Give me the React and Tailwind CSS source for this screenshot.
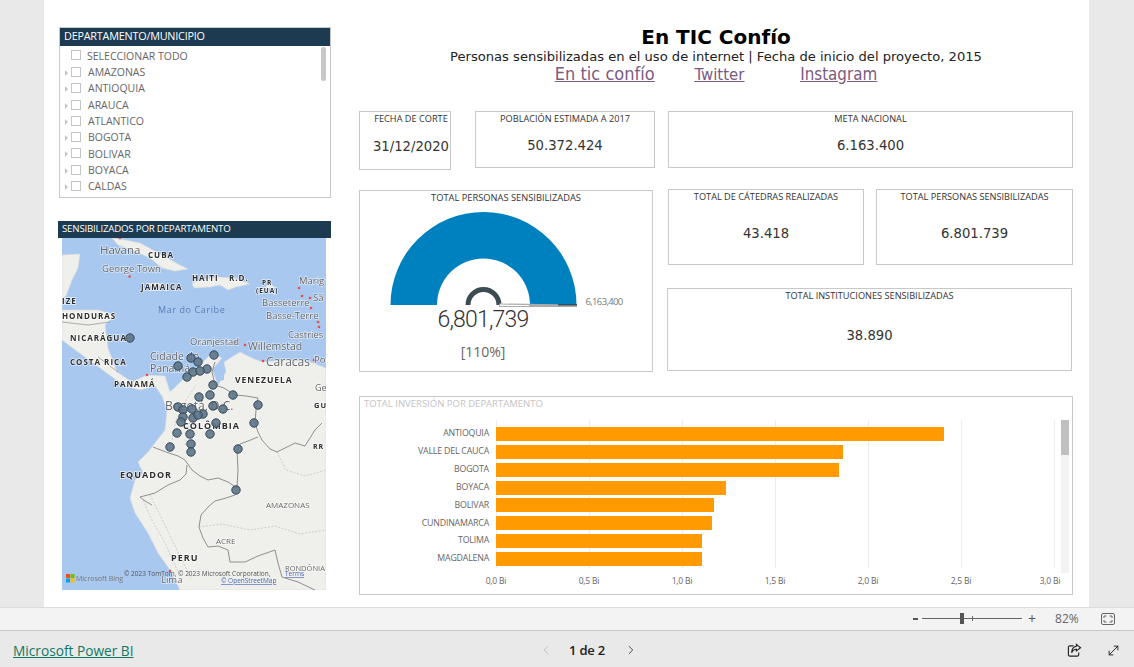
import { ChevronLeft, ChevronRight, MoveDiagonal } from "lucide-react"

const segoe = "font-['Open_Sans',sans-serif]"
const verdana = "font-['DejaVu_Sans',sans-serif]"
const condensed = "font-['DejaVu_Sans_Condensed','DejaVu_Sans',sans-serif]"

const departments = ["AMAZONAS", "ANTIOQUIA", "ARAUCA", "ATLANTICO", "BOGOTA", "BOLIVAR", "BOYACA", "CALDAS"]

const bars = [
  { name: "ANTIOQUIA", value: 2.41 },
  { name: "VALLE DEL CAUCA", value: 1.865 },
  { name: "BOGOTA", value: 1.845 },
  { name: "BOYACA", value: 1.235 },
  { name: "BOLIVAR", value: 1.17 },
  { name: "CUNDINAMARCA", value: 1.16 },
  { name: "TOLIMA", value: 1.11 },
  { name: "MAGDALENA", value: 1.105 },
]

const ticks = ["0,0 Bi", "0,5 Bi", "1,0 Bi", "1,5 Bi", "2,0 Bi", "2,5 Bi", "3,0 Bi"]

const dots = [
  [130, 338], [214, 355], [191, 358], [198, 362], [178, 366], [207, 369], [193, 372], [200, 371], [187, 377],
  [213, 385], [210, 395], [233, 395], [199, 397], [258, 405], [213, 406], [223, 409], [178, 407], [192, 409],
  [183, 410], [183, 417], [181, 422], [193, 418], [203, 414], [198, 415], [216, 423], [254, 423], [177, 433],
  [190, 434], [210, 434], [170, 447], [191, 444], [191, 452], [238, 449], [236, 490],
]

const redDots = [
  [129.7, 276.5], [120, 238], [299, 288], [302, 296], [310, 298], [311, 308], [318, 322], [319, 327], [235, 342],
  [245, 345], [263, 361], [314, 360], [147, 375], [170, 571],
]

// map labels: text, x, y, size, bold
const labels = [
  ["Havana", 100, 254, 11.5],
  ["CUBA", 148, 258, 8, true],
  ["George Town", 102, 272, 9.5],
  ["HAITI", 192, 281, 8, true],
  ["R.D.", 229, 281, 8, true],
  ["JAMAICA", 141, 290, 8, true],
  ["PR", 262, 285, 6.5, true],
  ["(EUA)", 256, 293, 6.5, true],
  ["Marig", 299, 284, 9.5],
  ["Sã", 313, 301, 9.5],
  ["Basseterre", 262, 306, 9.5],
  ["Basse-Terre", 266, 319, 9.5],
  ["IZE", 62, 304, 8, true],
  ["HONDURAS", 62, 319, 8, true],
  ["NICARÁGUA", 70, 341, 8, true],
  ["COSTA RICA", 70, 365, 8, true],
  ["PANAMÁ", 114, 387, 8, true],
  ["Castries", 288, 338, 9.5],
  ["Oranjestad", 190, 345, 9.5],
  ["Willemstad", 248, 350, 10.5],
  ["Cidade do", 150, 360, 10.5],
  ["Panamá", 150, 372, 10.5],
  ["Caracas", 266, 366, 12],
  ["Po", 314, 363, 9.5],
  ["VENEZUELA", 235, 383, 8.5, true],
  ["Ge", 315, 391, 9],
  ["GU", 314, 408, 7.5, true],
  ["Bogotá, D.C.", 165, 410, 12],
  ["COLÔMBIA", 183, 429, 9, true],
  ["RR", 313, 449, 7, true],
  ["EQUADOR", 120, 478, 9, true],
  ["AMAZONAS", 266, 508, 8],
  ["ACRE", 216, 544, 8],
  ["PERU", 171, 561, 9, true],
  ["RONDÔNIA", 285, 571, 7.5],
  ["Lima", 161, 583, 9.5],
]

const MapDrawing = () => (
  <svg viewBox="62 238 264 352" className="block h-[352px] w-[264px] blur-[0.3px]">
    <rect x="62" y="238" width="264" height="352" fill="#a8c8f0" />
    <g fill="#efefec" stroke="#dcdcd8" strokeWidth="0.6">
      {/* cuba */}
      <path d="M112 238 L125 240 L140 243 L160 254 L178 264 L188 269 L175 271 L162 268 L150 258 L132 250 L118 245 Z" />
      {/* jamaica, hispaniola, pr */}
      <path d="M146 284 L158 283 L163 285 L154 287 Z" />
      <path d="M192 283 L205 279 L218 277 L235 278 L250 284 L236 287 L228 290 L220 285 L210 287 L194 288 Z" />
      <path d="M266 286 L274 286 L274 288 L266 288 Z" />
      {/* yucatan */}
      <path d="M62 255 L80 254 L78 268 L72 280 L66 296 L62 298 Z" />
      {/* central america and south america */}
      <path d="M62 310 L98 310 L115 315 L105 325 L108 348 L117 372 L132 382 L147 375 L165 376 L170 392 L188 375 L204 361 L212 353 L222 358 L212 370 L218 385 L226 372 L224 362 L240 352 L252 358 L262 362 L288 360 L310 362 L326 368 L326 590 L180 590 L170 570 L158 553 L148 533 L135 513 L130 498 L135 480 L143 473 L138 462 L148 452 L155 443 L165 430 L167 410 L162 396 L155 386 L140 390 L125 386 L108 374 L92 362 L78 352 L62 340 Z" />
    </g>
    <path d="M218 368 L224 367 L224 380 L219 381 Z" fill="#a8c8f0" />
    {/* andes and rivers, faint */}
    <g fill="none" stroke="#c4c4bf" strokeWidth="0.8" strokeDasharray="2 1.5">
      <path d="M143 500 L152 520 L166 545 L178 572" />
      <path d="M150 495 L165 525 L178 552 L192 580" />
      <path d="M172 440 L176 420 L186 400 L196 385" />
      <path d="M185 445 L190 420 L205 398 L214 380" />
      <path d="M199 527 L222 524 L250 530 L275 526 L300 534 L326 530" />
      <path d="M277 452 L286 470 L305 476 L326 470" />
    </g>
    <g fill="none" stroke="#8f8f8d" strokeWidth="1">
      <path d="M215 362 L212 372 L215 385 L224 388 L235 395 L246 396 L258 398 L256 410 L255 423 L258 432 L262 440 L270 449 L277 452 L285 448 L295 443 L305 446 L315 430 L322 423" />
      <path d="M258 437 L248 441 L240 444 L237 450 L238 470 L237 487" />
      <path d="M153 447 L166 452 L178 456 L185 460 L192 470 L200 476 L208 480 L218 478 L228 482 L237 488" />
      <path d="M187 465 L186 474 L180 480 L168 485 L155 493 L140 497 L145 501 L152 505" />
      <path d="M235 495 L226 498 L215 501 L208 507 L201 515 L199 527 L203 538 L208 547 L218 546 L228 550 L230 562 L245 562 L258 556 L275 550 L278 563 L282 577 L298 582 L315 590" />
      <path d="M62 322 L88 325 L110 322" strokeWidth="0.7" />
      <path d="M98 357 L118 372" strokeWidth="0.7" />
    </g>
    {redDots.map(([x, y]) => (
      <circle key={`${x}-${y}`} cx={x} cy={y} r="1.3" fill="#ee4b4b" />
    ))}
    <g fontFamily="'Open Sans', sans-serif" stroke="#ffffff" strokeWidth="1.4" paintOrder="stroke">
      {labels.map(([text, x, y, size, bold]) => (
        <text key={text} x={x} y={y} fontSize={size} fontWeight={bold ? 700 : 400} letterSpacing={bold ? 1 : 0} fill={bold ? "#2d2d2d" : "#666666"} strokeOpacity={bold ? 0.8 : 0.6}>
          {text}
        </text>
      ))}
      <text x="158" y="313" fontSize="9" letterSpacing="0.6" fill="#5a7fb5" stroke="none">Mar do Caribe</text>
    </g>
    {dots.map(([x, y]) => (
      <circle key={`${x}-${y}`} cx={x} cy={y} r="4.2" fill="#5d7488" fillOpacity="0.9" stroke="#33475a" strokeWidth="1" />
    ))}
    <g>
      <rect x="66" y="574" width="4" height="4" fill="#f25022" />
      <rect x="70.5" y="574" width="4" height="4" fill="#7fba00" />
      <rect x="66" y="578.5" width="4" height="4" fill="#00a4ef" />
      <rect x="70.5" y="578.5" width="4" height="4" fill="#ffb900" />
      <text x="76" y="581" fontSize="7" fontFamily="'Open Sans', sans-serif" fill="#777777">Microsoft Bing</text>
    </g>
    <g fontFamily="'Open Sans', sans-serif" fontSize="6.5">
      <text x="124" y="576" fill="#555555">© 2023 TomTom, © 2023 Microsoft Corporation,</text>
      <text x="285" y="576" fill="#4a67b0" textDecoration="underline">Terms</text>
      <text x="221" y="583" fill="#4a67b0" textDecoration="underline">© OpenStreetMap</text>
    </g>
  </svg>
)

const Gauge = () => (
  <svg viewBox="360 205 292 103" className="block h-[103px] w-[292px]">
    <path d="M390.5 305 A93 93 0 0 1 576.5 305 L530 305 A46.5 46.5 0 0 0 437 305 Z" fill="#0081bf" />
    <path d="M468 305 A15.5 15.5 0 0 1 499 305" fill="none" stroke="#3c4c50" strokeWidth="5" />
    <polygon points="499,303.5 577,304.5 577,307 499,307" fill="#aaaaaa" />
    <polygon points="500,304.5 529,305 529,306 500,306" fill="#ffffff" />
    <rect x="558" y="304.2" width="19" height="1.2" fill="#23404f" />
    <text x="585.5" y="305" fontSize="9.5" fontFamily="'Open Sans', sans-serif" letterSpacing="-0.65" fill="#777777">6,163,400</text>
  </svg>
)

const StatCard = ({ title, value, className, valueClass }) => (
  <div className={`flex flex-col items-center border border-[#c8c8c8] bg-white ${className}`}>
    <div className={`${segoe} mt-[1px] text-[9.2px] leading-[12px] text-[#333]`}>{title}</div>
    <div className={`${verdana} text-[13.2px] text-[#333] ${valueClass}`}>{value}</div>
  </div>
)

const App = () => {
  return (
    <div className="flex h-[667px] w-[1134px] flex-col overflow-hidden bg-[#e9e9e9]">
      <div className="h-[607px] pl-[44px]">
        <div className="flex h-[607px] w-[1045px] bg-white pl-[15px]">
          {/* Left column */}
          <div className="w-[272px] pt-[27px]">
            <div className="h-[171px] border border-[#c8c8c8]">
              <div className={`${segoe} flex h-[18px] items-center bg-[#1c3b50] pb-[1px] pl-[4px] text-[10.8px] tracking-[-0.2px] text-white`}>
                DEPARTAMENTO/MUNICIPIO
              </div>
              <div className="relative">
                <div className="absolute right-[4px] top-[1px] h-[34px] w-[5px] rounded-sm bg-[#c8c8c8]"></div>
                <div className={`${segoe} pt-[2.5px] text-[10.5px] text-[#666]`}>
                  <div className="flex h-[16.3px] items-center pl-[11px]">
                    <span className="mr-[6px] mt-[-3px] h-[10px] w-[10px] border border-[#c4c4c4]"></span>
                    SELECCIONAR TODO
                  </div>
                  {departments.map((dep) => (
                    <div key={dep} className="flex h-[16.3px] items-center pl-[5px]">
                      <span className="mr-[3px] h-0 w-0 border-y-[3px] border-l-[3px] border-y-transparent border-l-[#c4c4c4]"></span>
                      <span className="mr-[7px] mt-[-2px] h-[10px] w-[10px] border border-[#c4c4c4]"></span>
                      {dep}
                    </div>
                  ))}
                </div>
              </div>
            </div>

            <div className={`${segoe} ml-[-1px] mt-[23px] flex h-[17px] items-center bg-[#1c3b50] pb-[1px] pl-[4px] text-[9.7px] tracking-[-0.2px] text-white`}>
              SENSIBILIZADOS POR DEPARTAMENTO
            </div>
            <div className="ml-[3px]">
              <MapDrawing />
            </div>
          </div>

          {/* Right column */}
          <div className="ml-[28px] w-[714px] pt-[25px]">
            <div className={`${verdana} text-center`}>
              <h1 className="text-[20px] font-bold leading-[24px] text-black">En TIC Confío</h1>
              <p className="text-[13.1px] leading-[15px] text-[#222]">Personas sensibilizadas en el uso de internet | Fecha de inicio del proyecto, 2015</p>
              <div className={`${condensed} mt-[-1px] flex h-[23px] items-baseline justify-center leading-[22px] text-[#7b5a80] underline`}>
                <a className="text-[18px]">En tic confío</a>
                <a className="ml-[40px] text-[16.6px]">Twitter</a>
                <a className="ml-[56px] text-[16.8px]">Instagram</a>
              </div>
            </div>

            <div className="mt-[25px] flex items-start">
              <StatCard title="FECHA DE CORTE" value="31/12/2020" className="h-[59px] w-[92px] pl-[12px]" valueClass="mt-[12px]" />
              <StatCard title="POBLACIÓN ESTIMADA A 2017" value="50.372.424" className="ml-[24px] h-[57px] w-[180px]" valueClass="mt-[11px]" />
              <StatCard title="META NACIONAL" value="6.163.400" className="ml-[13px] h-[57px] w-[405px]" valueClass="mt-[11px]" />
            </div>

            <div className="mt-[19px] flex items-start">
              <div className="mt-[1px] h-[182px] w-[294px] border border-[#c8c8c8]">
                <div className={`${segoe} h-[14px] text-center text-[9.3px] leading-[14px] text-[#333]`}>TOTAL PERSONAS SENSIBILIZADAS</div>
                <Gauge />
                <div className="mt-[-2px] w-[246px] text-center font-['Roboto',sans-serif] text-[23px] font-light leading-[28px] tracking-[-0.8px] text-[#333]">6,801,739</div>
                <div className={`${segoe} mt-[8px] w-[246px] text-center text-[14px] leading-[20px] text-[#666]`}>[110%]</div>
              </div>

              <div className="ml-[15px] w-[405px]">
                <div className="flex">
                  <StatCard title="TOTAL DE CÁTEDRAS REALIZADAS" value="43.418" className="h-[76px] w-[196px]" valueClass="mt-[21px]" />
                  <StatCard title="TOTAL PERSONAS SENSIBILIZADAS" value="6.801.739" className="ml-[12px] h-[76px] w-[197px]" valueClass="mt-[21px]" />
                </div>
                <StatCard title="TOTAL INSTITUCIONES SENSIBILIZADAS" value="38.890" className="ml-[-1px] mt-[23px] h-[83px] w-[405px]" valueClass="mt-[24px]" />
              </div>
            </div>

            {/* Bar chart */}
            <div className="relative mt-[24px] h-[199px] w-[714px] border border-[#c8c8c8]">
              <div className={`${segoe} pl-[4px] pt-[1px] text-[9.5px] leading-[12px] text-[#c4c4c4]`}>TOTAL INVERSIÓN POR DEPARTAMENTO</div>
              <div className={`${segoe} relative ml-[136px] mt-[10px] h-[155px] w-[560px]`}>
                {ticks.map((tick, i) => (
                  <div key={tick} className="absolute bottom-[7px] top-0 w-px bg-[#ececec]" style={{ left: i * 93 }}></div>
                ))}
                <div className="relative flex flex-col gap-[3.85px] pt-[7px]">
                  {bars.map((bar) => (
                    <div key={bar.name} className="flex h-[14px] items-center">
                      <div className="ml-[-136px] mr-[7px] w-[129px] text-right text-[8.8px] tracking-[-0.2px] text-[#666]">{bar.name}</div>
                      <div className="h-[14px] bg-[#ff9a00]" style={{ width: bar.value * 186 }}></div>
                    </div>
                  ))}
                </div>
              </div>
              <div className={`${segoe} relative ml-[136px] mt-[-1px] h-[14px] text-[8.5px] leading-[14px] tracking-[-0.2px] text-[#666]`}>
                {ticks.map((tick, i) => (
                  <span key={tick} className="absolute -translate-x-1/2" style={{ left: i === 6 ? 554 : i * 93 }}>{tick}</span>
                ))}
              </div>
              <div className="absolute left-[701px] top-[23px] h-[153px] w-[8px] bg-[#f3f3f3]">
                <div className="h-[35px] w-[8px] bg-[#c0c0c0]"></div>
              </div>
            </div>
          </div>
        </div>
      </div>

      {/* Status bar */}
      <div className={`${segoe} flex h-[24px] items-center border-y border-b-[#c8c8c8] border-t-[#dcdcdc] bg-[#f3f3f3] pl-[913px] text-[#666]`}>
        <span className="h-[2px] w-[5px] bg-[#555]"></span>
        <div className="relative ml-[4px] h-px w-[100px] bg-[#666]">
          <span className="absolute left-[38px] top-[-5px] h-[11px] w-[4px] bg-[#555]"></span>
          <span className="absolute left-[50px] top-[-2px] h-[5px] w-px bg-[#666]"></span>
        </div>
        <span className="ml-[6px] text-[14px] leading-none text-[#555]">+</span>
        <span className="ml-[19px] text-[12px]">82%</span>
        <svg viewBox="0 0 14 12" className="ml-[22px] h-[12px] w-[14px]" fill="none" stroke="#666" strokeWidth="1">
          <rect x="0.5" y="0.5" width="13" height="11" rx="1.5" />
          <path d="M3 5V3h2.5M11 5V3H8.5M3 7v2h2.5M11 7v2H8.5" />
        </svg>
      </div>

      {/* Footer */}
      <div className="relative flex h-[37px] items-center">
        <a className={`${segoe} ml-[13px] mt-[4px] text-[13.7px] text-[#117865] underline`}>Microsoft Power BI</a>
        <ChevronLeft className="absolute left-[539px] top-[12px] h-[14px] w-[14px] text-[#bbbbbb]" strokeWidth={1.5} />
        <span className={`${segoe} absolute left-[569px] top-[10px] text-[13px] font-semibold leading-[18px] tracking-[-0.2px] text-[#222]`}>1 de 2</span>
        <ChevronRight className="absolute left-[624px] top-[12px] h-[14px] w-[14px] text-[#333]" strokeWidth={1.5} />
        <svg viewBox="0 0 16 16" className="absolute left-[1067px] top-[12px] h-[15px] w-[15px]" fill="none" stroke="#222" strokeWidth="1.2">
          <path d="M7 3H3a1.5 1.5 0 0 0-1.5 1.5v8A1.5 1.5 0 0 0 3 14h8a1.5 1.5 0 0 0 1.5-1.5V10" />
          <path d="M10 1.5 14.5 5 10 8.5V6.7C7.5 6.7 6 8 5 10.5 5 6.5 7 4 10 3.4Z" />
        </svg>
        <MoveDiagonal className="absolute left-[1106px] top-[12px] h-[15px] w-[15px] text-[#222]" strokeWidth={1.5} />
      </div>
    </div>
  )
}

export default App
